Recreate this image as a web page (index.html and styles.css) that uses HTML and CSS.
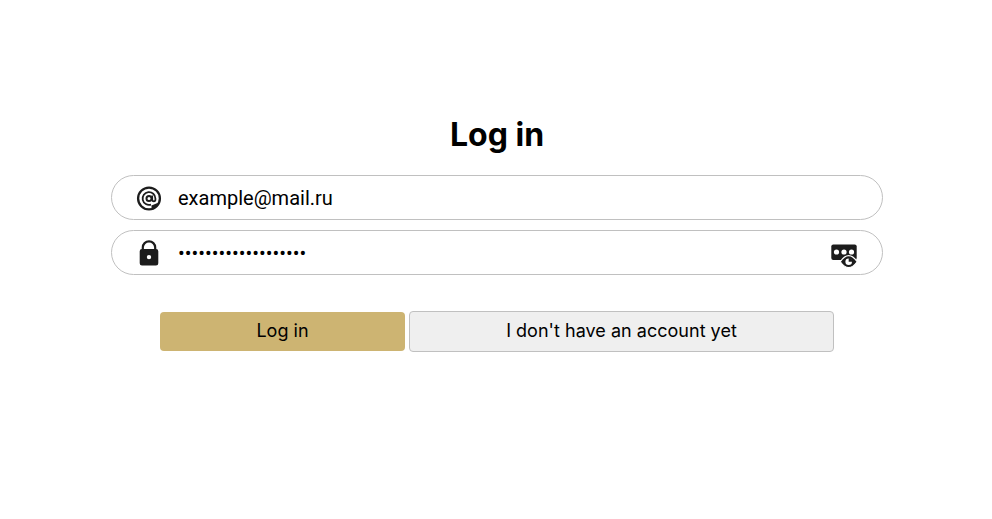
FILE: index.html
```html
<!DOCTYPE html>
<html lang="en">
<head>
<meta charset="utf-8">
<title>Log in</title>
<link rel="stylesheet" href="styles.css">
</head>
<body>
<main class="login">
  <h1 class="title">Log in</h1>
  <form class="form">
    <label class="field">
      <svg class="icon" viewBox="0 0 26 26" fill="none" stroke="#1c1c1c">
        <circle cx="13" cy="13.500" r="10.900" stroke-width="2.300"/>
        <path d="M15 19.600A6.400 6.400 0 1 1 19.400 13.500V14.600Q19.400 16.400 17.900 16.400T16.200 14.600V10.500" stroke-width="1.800"/>
        <circle cx="13" cy="13.500" r="2.500" stroke-width="2"/>
        <path d="M15.500 20.500L21.500 18L22 20L17 24L15.500 23Z" fill="#1c1c1c" stroke="none"/>
      </svg>
      <input class="input" type="text" value="example@mail.ru">
    </label>
    <label class="field">
      <svg class="icon" viewBox="0 0 26 26">
        <path d="M6.800 11V7.500a6.200 6.200 0 0 1 12.400 0V11" fill="none" stroke="#1c1c1c" stroke-width="2.200"/>
        <path fill="#1c1c1c" fill-rule="evenodd" d="M6 9h14q2.300 0 2.300 2.300v12q0 2.300-2.300 2.300H6q-2.300 0-2.300-2.300v-12Q3.700 9 6 9zm7 5.900a2.200 2.200 0 1 0 0 4.400a2.200 2.200 0 0 0 0-4.400z"/>
      </svg>
      <input class="input" type="password" value="examplepassword1234">
      <svg class="icon reveal" viewBox="0 0 26 26">
        <rect x=".3" y="2.500" width="25.400" height="15.500" rx="2" fill="#1c1c1c"/>
        <g fill="#fff"><circle cx="5.500" cy="10" r="2.600"/><circle cx="13" cy="10" r="2.600"/><circle cx="20.500" cy="10" r="2.600"/></g>
        <path d="M9.300 19.700Q17.700 7.500 26.100 19.700Q17.700 31.500 9.300 19.700Z" fill="#1c1c1c" stroke="#fff" stroke-width="1.100"/>
        <circle cx="17.700" cy="19.800" r="3.300" fill="#fff"/>
        <path d="M17.700 19.800V16.100A3.700 3.700 0 0 1 21.400 19.800Z" fill="#1c1c1c"/>
      </svg>
    </label>
    <div class="actions">
      <button class="btn btn-primary" type="button">Log in</button>
      <button class="btn btn-secondary" type="button">I don't have an account yet</button>
    </div>
  </form>
</main>
</body>
</html>
```
FILE: styles.css
```css
* { box-sizing: border-box; }
body { margin: 0; background: #fff; color: #000; font-family: Inter, sans-serif; }
.login { width: 772px; margin: 0 109px 0 111px; padding-top: 115px; }
.title { margin: 0 0 20px; font-size: 32px; line-height: 40px; font-weight: 700; text-align: center; }
.form { display: flex; flex-direction: column; gap: 10px; }
.field { display: flex; align-items: center; height: 45px; padding: 0 25px 0 24px; border: 1px solid #c0c0c0; border-radius: 23px; }
.icon { width: 26px; height: 26px; flex: none; overflow: visible; }
.reveal { margin-top: 4px; }
.input { flex: 1; min-width: 0; margin: 0 0 0 16px; padding: 0; border: 0; outline: 0; background: none; color: #000; font: 20px Roboto, sans-serif; }
.actions { display: flex; align-items: center; justify-content: center; gap: 4px; margin-top: 26px; }
.btn { padding: 0 0 2px; border-radius: 4px; color: #000; font: 400 18px Inter, sans-serif; letter-spacing: .02px; }
.btn-primary { width: 245px; height: 39px; border: 0; background: #cdb472; }
.btn-secondary { width: 425px; height: 41px; border: 1px solid #c0c0c0; background: #efefef; }
```
